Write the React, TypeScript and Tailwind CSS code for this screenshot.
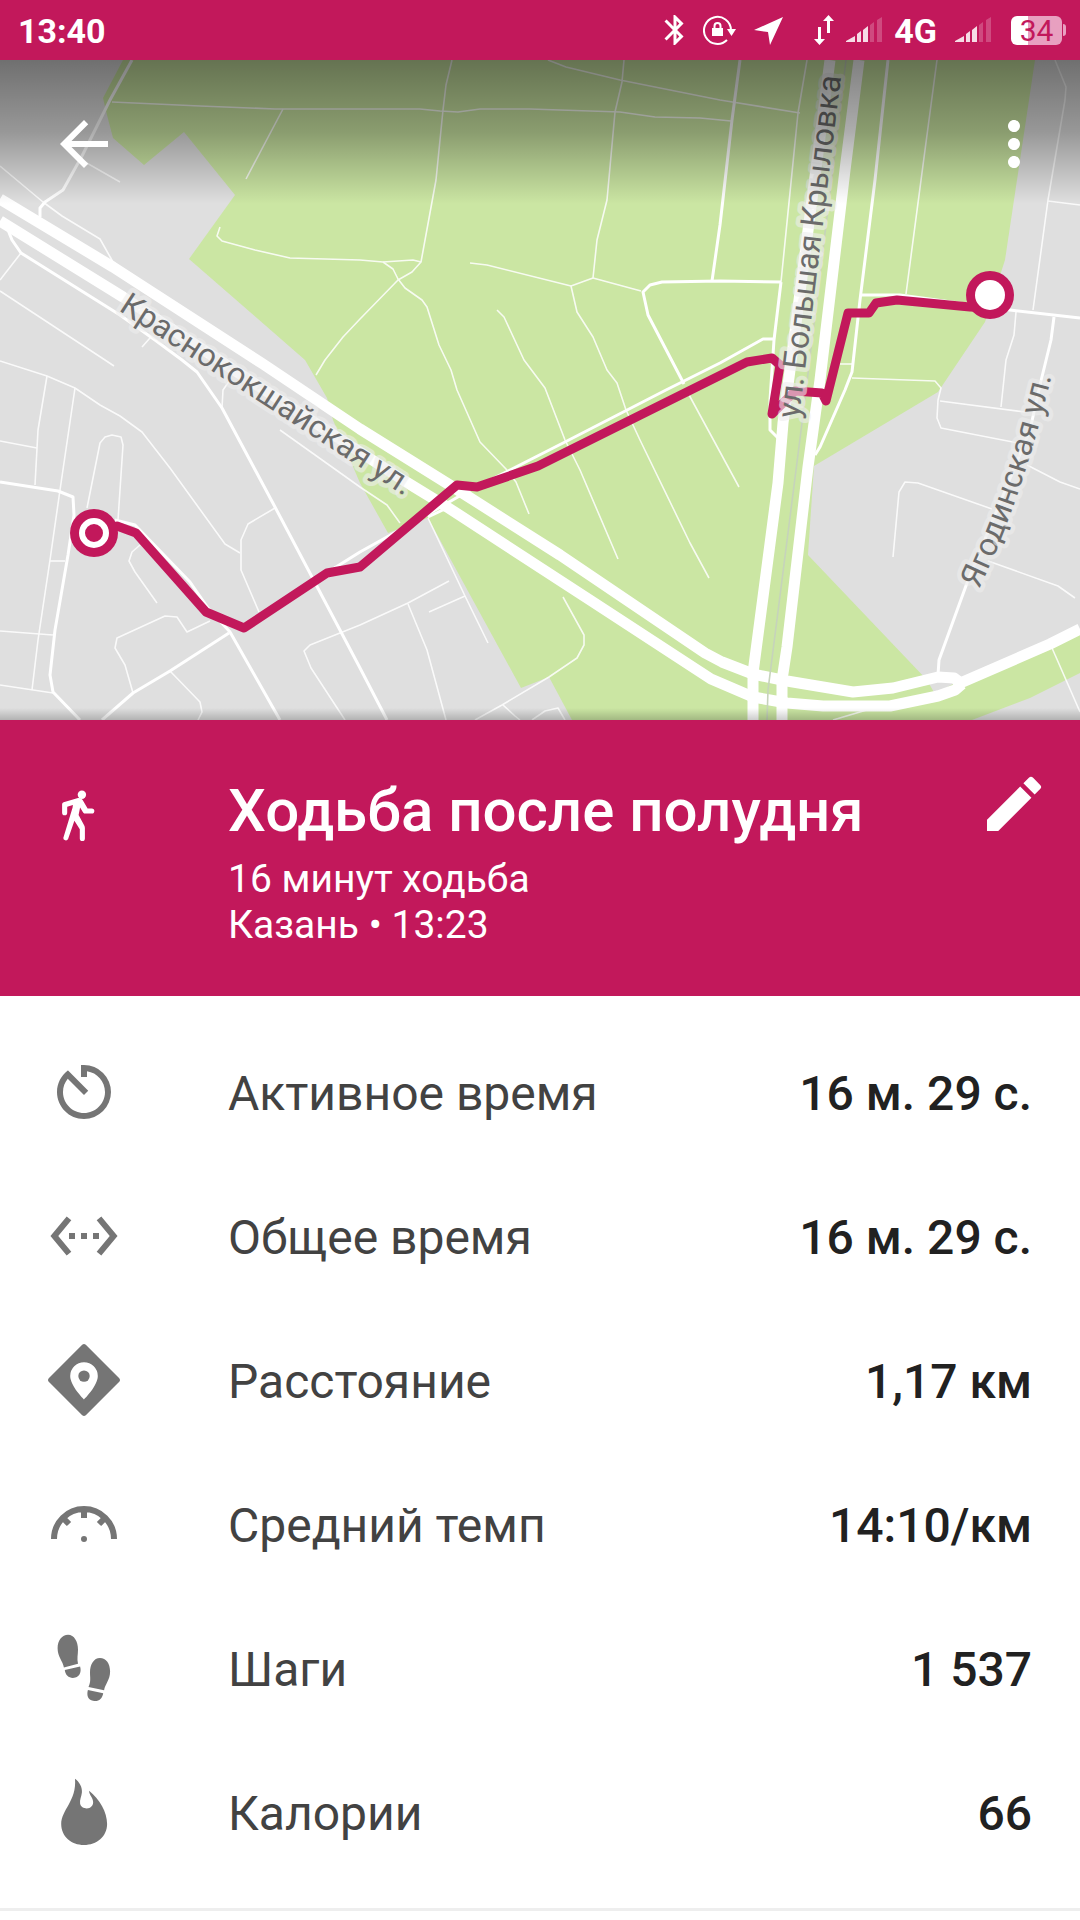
import type { ReactNode } from "react";
import { MdArrowBack, MdBluetooth, MdEdit, MdMoreVert, MdSettingsEthernet } from "react-icons/md";

const GREY_AREAS = [
    "0,60 123,60 103,98 107,115 113,138 144,165 184,132 235,195 189,259 305,360 327,398 333,420 360,483 388,533 428,518 521,688 549,677 572,720 0,720",
    "1035,60 1080,60 1080,630 960,680 935,694 927,680 808,555 814,466 938,392 985,322 1005,260",
    "972,720 1030,698 1080,673 1080,720",
]

const HIGHWAYS = [
    "0,199 113,267 263,364 360,429 453,487 560,555 705,653 722,662 753,674 787,681 853,692 893,688 938,677 954,678 962,684",
    "0,221 123,297 260,387 403,480 447,507 593,602 711,679 753,697 787,703 823,706 890,706 938,696 955,690 962,684",
    "958,684 1050,644 1080,629",
    "830,60 790,370 783,423 778,483 753,673 753,720",
    "859,60 845,170 820,380 808,467 787,647 782,680 782,720",
]

const STREETS = [
    "132,60 110,100 82,156 63,190 45,202 40,208 40,217",
    "8,230 12,240 21,253 120,315 155,340 182,360 197,372 222,408 275,507 312,577 360,668 387,720",
    "740,60 732,120 720,225 712,281",
    "781,282 720,281 662,282 650,285 643,292 648,315 684,384",
    "781,282 774,340 770,400 770,430 778,438",
    "775,339 763,339 720,363 666,390 565,442 510,470 470,490 430,513 360,552 320,577",
    "888,60 875,180 860,300 852,372 845,390 820,447 815,455",
    "862,295 900,295 1010,310 1080,318",
    "1054,317 1051,340 1040,385 1030,430 967,583 939,660 938,675",
    "0,482 58,491 73,497 74,515 68,555 55,630 50,675 53,692 80,720",
    "115,520 135,525 190,582 208,608 230,632 280,720",
    "102,720 133,693 170,671 229,633",
    "428,517 447,508",
]

const LANES = [
    "0,166 43,202 62,216 100,239 113,262",
    "85,162 120,182",
    "21,253 0,280",
    "0,291 105,360 114,366",
    "0,361 47,376 75,388 100,405 120,416 142,432 170,468 225,544 240,553",
    "150,338 142,347",
    "112,102 200,106 275,109 420,109 440,111 458,112 480,109 530,109 620,112 655,117 700,118 731,121",
    "283,109 246,179",
    "220,227 217,236 222,241 255,250 290,258 360,260 383,262 413,260 421,262",
    "452,60 446,85 443,110 436,180 421,262 412,272 398,280 360,319 343,337 325,360 316,375",
    "383,262 393,269 398,279 405,288 422,300 427,307 439,345 451,370 457,390 480,442 506,469 516,482 529,514",
    "548,60 566,67 620,80 720,100 800,113",
    "624,60 622,82 615,112 607,200 597,240 593,278 641,291",
    "470,263 487,265 571,286 593,278",
    "571,286 577,312 593,337 607,370 617,383 626,410 640,440 690,543 709,578",
    "497,310 504,317 524,360 545,388 565,440 580,470 618,559",
    "688,393 720,452 739,487",
    "807,60 798,113 781,282",
    "937,60 925,150 906,294",
    "1055,60 1066,87 1065,100 1048,200 1033,310",
    "1048,201 1080,205",
    "1016,312 1014,335 1006,360 1001,407",
    "852,378 935,381 941,388 938,400 937,418 941,428 1018,443",
    "940,401 1025,412",
    "852,364 840,364",
    "1027,465 1060,482 1080,489",
    "893,557 899,492 905,482 918,483 992,509",
    "988,561 1058,586 1075,598",
    "1052,648 1080,712",
    "833,720 870,709",
    "47,376 38,430 35,485",
    "75,388 60,490 50,560 38,640 32,690",
    "0,441 37,448",
    "87,508 100,443 105,437 112,435 121,437 123,445 118,520",
    "50,561 65,561",
    "0,631 53,635",
    "0,685 53,693",
    "230,380 223,390 222,408",
    "280,430 360,487 387,505 400,523",
    "275,508 248,524 241,540 241,570 259,612",
    "140,545 132,552 129,561 135,572 157,603",
    "133,693 125,665 115,648 117,638 165,616 177,617 187,632 210,621",
    "170,671 200,702 202,712 198,720",
    "345,720 311,668 304,651 310,645 360,625 408,603 449,581",
    "408,604 427,650 446,720",
    "429,612 465,596",
    "428,518 465,596 488,643",
    "475,720 502,705 549,677 577,658 584,645 584,635 563,597",
    "503,705 515,716 520,720",
    "532,720 545,711 558,708 565,720",
]

const LABEL_CLASS = "fill-[#6b6b6b] stroke-[#ededed]/60 text-[32px]"

function RouteMap() {
    return (
        <svg viewBox="0 60 1080 660" className="block w-full" role="img" aria-label="Маршрут на карте">
            <defs>
                <linearGradient id="topShade" x1="0" y1="0" x2="0" y2="1">
                    <stop offset="0" stopColor="#000" stopOpacity="0.5" />
                    <stop offset="0.5" stopColor="#000" stopOpacity="0.32" />
                    <stop offset="1" stopColor="#000" stopOpacity="0" />
                </linearGradient>
                <linearGradient id="bottomShade" x1="0" y1="0" x2="0" y2="1">
                    <stop offset="0" stopColor="#000" stopOpacity="0" />
                    <stop offset="1" stopColor="#000" stopOpacity="0.2" />
                </linearGradient>
                <path id="yagodinskaya" d="M979 589Q1023 498 1053 370" />
            </defs>
            <rect y="60" width="1080" height="660" fill="#cbe6a3" />
            {GREY_AREAS.map(points => <polygon key={points} points={points} fill="#dfdfdf" />)}

            <g fill="none" stroke="#fff" strokeLinejoin="round">
                <g strokeWidth="1.6" opacity="0.85">
                    {LANES.map(points => <polyline key={points} points={points} />)}
                </g>
                <g strokeWidth="3">
                    {STREETS.map(points => <polyline key={points} points={points} />)}
                </g>
                <g strokeWidth="11">
                    {HIGHWAYS.map(points => <polyline key={points} points={points} />)}
                </g>
            </g>
            {/* railway */}
            <polyline points="846,60 802,423 768,690 767,720" fill="none" stroke="#c6d3bb" strokeWidth="1.6" />

            {/* walked route */}
            <g fill="none" stroke="#c2185b" strokeWidth="9" strokeLinejoin="round" strokeLinecap="round">
                <polyline points="94,533 117,526 136,533 206,612 244,628 327,573 360,567 457,485 477,487 538,466 747,362 772,358 780,365 772,414 795,391 822,393 826,401 848,313 869,313 876,303 897,300 970,307 990,308" />
            </g>

            <g strokeWidth="9" strokeLinejoin="round" paintOrder="stroke">
                <text transform="translate(118 310) rotate(33)" className={LABEL_CLASS}>Краснококшайская ул.</text>
                <text transform="translate(799 419) rotate(-83)" className={LABEL_CLASS}>ул. Большая Крыловка</text>
                <text className={LABEL_CLASS}>
                    <textPath href="#yagodinskaya">Ягодинская ул.</textPath>
                </text>
            </g>

            <circle cx="94" cy="533" r="24" fill="#c2185b" />
            <circle cx="94" cy="533" r="12" fill="none" stroke="#fff" strokeWidth="6" />
            <circle cx="990" cy="295" r="24" fill="#c2185b" />
            <circle cx="990" cy="295" r="15" fill="#fff" />

            <rect y="60" width="1080" height="144" fill="url(#topShade)" />
            <rect y="708" width="1080" height="12" fill="url(#bottomShade)" />
        </svg>
    )
}

function SignalIcon() {
    return (
        <svg viewBox="0 0 36 26" className="h-[26px] w-9" fill="#fff">
            <path d="M0 25V24L9 19V25ZM11 25V17L15 14V25ZM17 25V13L22 9V25Z" opacity="0.85" />
            <path d="M24 25V8L28 5V25ZM31 25V3L36 0V25Z" opacity="0.22" />
        </svg>
    )
}

function StatusBar() {
    return (
        <div className="flex h-15 items-center justify-between bg-[#c2185b] pr-[14px] pl-[18px] text-white">
            <span className="pt-px text-[34px] leading-10 font-bold">13:40</span>
            <div className="flex items-center">
                <div className="flex items-center gap-[18px]">
                    <MdBluetooth className="-mx-2 size-9" />
                    <svg viewBox="0 0 33 30" className="h-[30px] w-[33px]" fill="none" stroke="#fff" strokeWidth="2">
                        <path d="M28 15A13.5 13.5 0 1 0 24 25" />
                        <path d="M24 14H33L28.500 21Z" fill="#fff" stroke="none" />
                        <path d="M9 13H20V21H9Z" fill="#fff" stroke="none" />
                        <path d="M11.500 14V11a3 3 0 0 1 6 0V14" />
                    </svg>
                    <svg viewBox="0 0 30 30" className="size-[30px]" fill="#fff">
                        <path d="M0 15L29 2L16 30L14 17Z" />
                    </svg>
                </div>
                <div className="ml-[30px] flex items-center gap-3">
                    <svg viewBox="0 0 20 30" className="h-[30px] w-5" fill="#fff">
                        <path d="M4 12H7V24H11L5.500 30L0 24H4ZM13 18V6H9L14.500 0L20 6H16V18Z" />
                    </svg>
                    <SignalIcon />
                    <span className="pt-px text-[34px] leading-10 font-bold">4G</span>
                </div>
                <div className="ml-[18px] flex items-center gap-5">
                    <SignalIcon />
                    <div className="flex items-center gap-px">
                        <span className="flex h-[29px] w-[51px] items-center justify-center rounded-md bg-linear-to-r from-white from-34% to-[#e8a0c0] to-34% text-[30px] leading-[29px] text-[#c2185b]">34</span>
                        <span className="h-3 w-[3px] rounded-r-sm bg-[#e8a0c0]" />
                    </div>
                </div>
            </div>
        </div>
    )
}

function WalkIcon() {
    return (
        <svg viewBox="0 0 24 24" className="size-18 shrink-0" fill="#fff">
            <circle cx="11.300" cy="4.900" r="1.400" />
            <path d="M4.700 8.100q0-.5.500-.7L10 6q1-.2 1.500.6L13.200 9.500H14.600a.8.800 0 0 1 0 1.700H12.500q-.5 0-.8-.4L10.700 9.200 10.200 11.700 12 15q.3.500.3 1V19.500a.85.850 0 0 1-1.700 0V16.400L8.800 13.600 6.700 19.700a.85.850 0 0 1-1.600-.4L8.200 9.200 8.300 8.300 6.400 8.900V10.900a.85.850 0 0 1-1.700 0Z" />
        </svg>
    )
}

function StatIcon({ children }: { children: ReactNode }) {
    return (
        <svg viewBox="0 0 24 24" className="size-18" fill="currentColor">
            {children}
        </svg>
    )
}

const stats = [
    {
        label: "Активное время",
        value: "16 м. 29 с.",
        icon: (
            <StatIcon>
                <path d="M11 3v4h2V5.080c3.390.490 6 3.390 6 6.920 0 3.870-3.130 7-7 7s-7-3.130-7-7c0-1.680.590-3.220 1.580-4.420L12 13l1.410-1.410-6.800-6.800v.020C4.420 6.450 3 9.050 3 12c0 4.970 4.020 9 9 9a9 9 0 0 0 0-18h-1z" />
            </StatIcon>
        ),
    },
    {
        label: "Общее время",
        value: "16 м. 29 с.",
        icon: <MdSettingsEthernet className="size-18" />,
    },
    {
        label: "Расстояние",
        value: "1,17 км",
        icon: (
            <StatIcon>
                <path
                    fillRule="evenodd"
                    d="M11.400.250q.6-.5 1.200 0L23.750 11.400q.5.600 0 1.200L12.600 23.750q-.6.500-1.200 0L.250 12.600q-.5-.6 0-1.200ZM12 6.100a4.600 4.600 0 0 0-4.600 4.600C7.400 14 12 18.500 12 18.500S16.600 14 16.600 10.700A4.600 4.600 0 0 0 12 6.100Z"
                />
                <circle cx="12" cy="10.700" r="1.900" />
            </StatIcon>
        ),
    },
    {
        label: "Средний темп",
        value: "14:10/км",
        icon: (
            <StatIcon>
                <path d="M2 17a10 10 0 0 1 20 0M12 7V10M4.900 9.900L7 12M19.100 9.900L17 12" fill="none" stroke="currentColor" strokeWidth="2" />
                <circle cx="12" cy="17" r="1" />
            </StatIcon>
        ),
    },
    {
        label: "Шаги",
        value: "1 537",
        icon: (
            <StatIcon>
                <path d="M6.700.900C8.700.900 10 3.200 10 5.800 10 7.500 9.600 8.800 10 10.600L5.300 11.800C5 9.800 3.200 8.200 3.200 5.400 3.200 2.700 4.700.900 6.700.900ZM5.600 12.700L10.700 11.500C11.200 13.300 10.600 14.800 9.100 15.200 7.300 15.600 5.800 14.700 5.600 12.700Z" />
                <path d="M17.300 8.700C19.400 8.700 20.700 10.600 20.700 13.200 20.700 16 19 17.500 18.700 19.400L13.500 18.300C14.400 16.500 14 15.200 14 13.500 14 10.800 15.300 8.700 17.300 8.700ZM13.300 19.300L18.400 20.400C18.100 22.400 16.700 23.300 15 22.900 13.400 22.600 12.800 21.200 13.300 19.300Z" />
            </StatIcon>
        ),
    },
    {
        label: "Калории",
        value: "66",
        icon: (
            <StatIcon>
                <path d="M9 .900C10.500 2 11.500 3.800 11.300 5.500 11.200 6.700 10.500 8 10.700 9.200 10.900 10.300 11.900 10.800 12.900 10.800 14.200 10.800 15.300 9.700 15 8.300 14.800 7 13.700 6.300 13.700 4.900 17.300 7.800 19.700 12 19.700 16 19.700 20.200 16.200 23 12 23 7.800 23 4.400 20.200 4.400 16 4.400 11.300 9.600 8.300 9 .900Z" />
            </StatIcon>
        ),
    },
]

function App() {
    return (
        <div className="min-h-screen bg-white font-['Roboto',sans-serif]">
            <StatusBar />

            <div className="relative">
                <RouteMap />
                <div className="absolute inset-x-0 top-0 flex justify-between pt-12 pr-[30px] pl-12 text-white">
                    <button type="button" aria-label="Назад">
                        <MdArrowBack className="size-18" />
                    </button>
                    <button type="button" aria-label="Ещё">
                        <MdMoreVert className="size-18" />
                    </button>
                </div>
            </div>

            <header className="flex items-start bg-[#c2185b] pr-[30px] pb-12 pl-12 text-white">
                <div className="pt-15">
                    <WalkIcon />
                </div>
                <div className="ml-[108px] flex-1 pt-14">
                    <h1 className="text-[60px] leading-[70px] font-medium">Ходьба после полудня</h1>
                    <p className="mt-[10px] text-[39px] leading-[46px]">16 минут ходьба</p>
                    <p className="text-[39px] leading-[46px]">Казань • 13:23</p>
                </div>
                <button type="button" aria-label="Изменить" className="pt-12">
                    <MdEdit className="size-18" />
                </button>
            </header>

            <dl className="border-b-[3px] border-[#eeeeee] py-6">
                {stats.map(stat => (
                    <div key={stat.label} className="flex h-36 items-center px-12 text-[48px] leading-14">
                        <dt className="flex flex-1 items-center gap-[108px] text-[#424242]">
                            <span className="text-[#757575]">{stat.icon}</span>
                            <span className="pt-1">{stat.label}</span>
                        </dt>
                        <dd className="pt-1 font-medium text-[#212121]">{stat.value}</dd>
                    </div>
                ))}
            </dl>
        </div>
    )
}

export default App
